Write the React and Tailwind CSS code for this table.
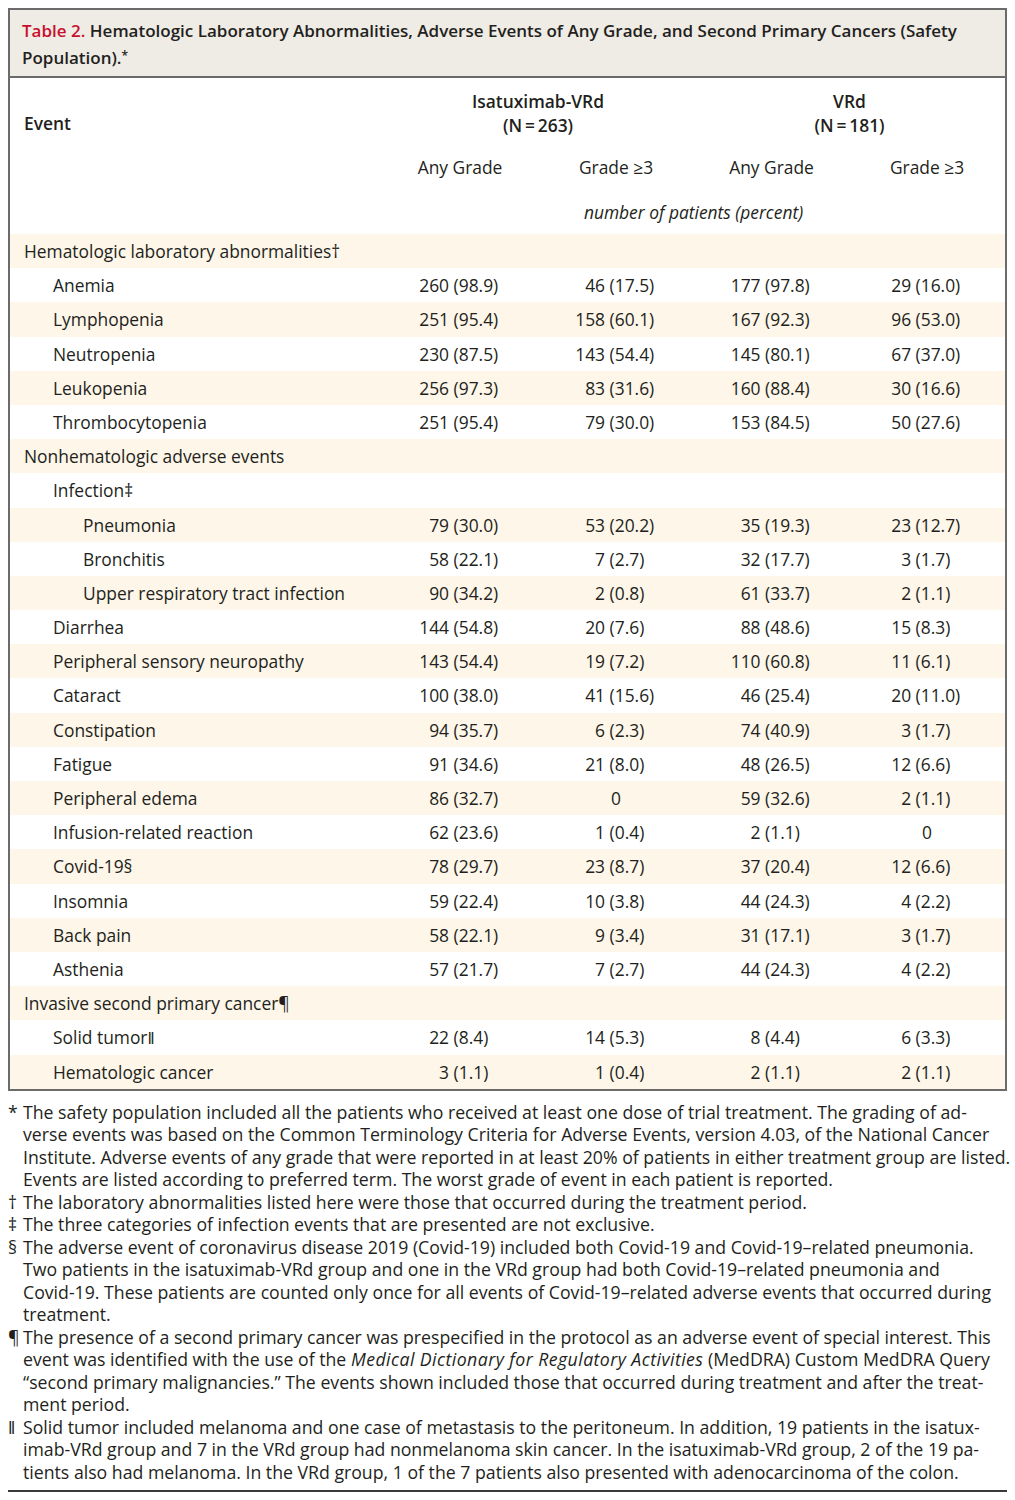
import React from "react";

const rows = [
  { l: "Hematologic laboratory abnormalities\u2020", lv: 0 },
  { l: "Anemia", lv: 1, v: ["260 (98.9)", "46 (17.5)", "177 (97.8)", "29 (16.0)"] },
  { l: "Lymphopenia", lv: 1, v: ["251 (95.4)", "158 (60.1)", "167 (92.3)", "96 (53.0)"] },
  { l: "Neutropenia", lv: 1, v: ["230 (87.5)", "143 (54.4)", "145 (80.1)", "67 (37.0)"] },
  { l: "Leukopenia", lv: 1, v: ["256 (97.3)", "83 (31.6)", "160 (88.4)", "30 (16.6)"] },
  { l: "Thrombocytopenia", lv: 1, v: ["251 (95.4)", "79 (30.0)", "153 (84.5)", "50 (27.6)"] },
  { l: "Nonhematologic adverse events", lv: 0 },
  { l: "Infection\u2021", lv: 1 },
  { l: "Pneumonia", lv: 2, v: ["79 (30.0)", "53 (20.2)", "35 (19.3)", "23 (12.7)"] },
  { l: "Bronchitis", lv: 2, v: ["58 (22.1)", "7 (2.7)", "32 (17.7)", "3 (1.7)"] },
  { l: "Upper respiratory tract infection", lv: 2, v: ["90 (34.2)", "2 (0.8)", "61 (33.7)", "2 (1.1)"] },
  { l: "Diarrhea", lv: 1, v: ["144 (54.8)", "20 (7.6)", "88 (48.6)", "15 (8.3)"] },
  { l: "Peripheral sensory neuropathy", lv: 1, v: ["143 (54.4)", "19 (7.2)", "110 (60.8)", "11 (6.1)"] },
  { l: "Cataract", lv: 1, v: ["100 (38.0)", "41 (15.6)", "46 (25.4)", "20 (11.0)"] },
  { l: "Constipation", lv: 1, v: ["94 (35.7)", "6 (2.3)", "74 (40.9)", "3 (1.7)"] },
  { l: "Fatigue", lv: 1, v: ["91 (34.6)", "21 (8.0)", "48 (26.5)", "12 (6.6)"] },
  { l: "Peripheral edema", lv: 1, v: ["86 (32.7)", "0", "59 (32.6)", "2 (1.1)"] },
  { l: "Infusion-related reaction", lv: 1, v: ["62 (23.6)", "1 (0.4)", "2 (1.1)", "0"] },
  { l: "Covid-19\u00a7", lv: 1, v: ["78 (29.7)", "23 (8.7)", "37 (20.4)", "12 (6.6)"] },
  { l: "Insomnia", lv: 1, v: ["59 (22.4)", "10 (3.8)", "44 (24.3)", "4 (2.2)"] },
  { l: "Back pain", lv: 1, v: ["58 (22.1)", "9 (3.4)", "31 (17.1)", "3 (1.7)"] },
  { l: "Asthenia", lv: 1, v: ["57 (21.7)", "7 (2.7)", "44 (24.3)", "4 (2.2)"] },
  { l: "Invasive second primary cancer\u00b6", lv: 0 },
  { l: "Solid tumor\u2016", lv: 1, v: ["22 (8.4)", "14 (5.3)", "8 (4.4)", "6 (3.3)"] },
  { l: "Hematologic cancer", lv: 1, v: ["3 (1.1)", "1 (0.4)", "2 (1.1)", "2 (1.1)"] },
];

const countW = ["w-[3ch]", "w-[3ch]", "w-[3ch]", "w-[2ch]"];

function Cell({ v, ci }) {
  if (v === undefined) return <div />;
  if (!v.includes(" (")) {
    return <div className="flex items-center justify-center">{v}</div>;
  }
  const i = v.indexOf(" (");
  const a = v.slice(0, i);
  const b = v.slice(i);
  return (
    <div className="flex items-center justify-center pr-[2px]">
      <span className={`${countW[ci]} text-right`}>{a}</span>
      <span className="w-[5ch] whitespace-pre text-left">{b}</span>
    </div>
  );
}

const pad = ["pl-[14px]", "pl-[43px]", "pl-[73px]"];

const notes = [
  {
    s: "*",
    lines: [
      "The safety population included all the patients who received at least one dose of trial treatment. The grading of ad-",
      "verse events was based on the Common Terminology Criteria for Adverse Events, version 4.03, of the National Cancer",
      "Institute. Adverse events of any grade that were reported in at least 20% of patients in either treatment group are listed.",
      "Events are listed according to preferred term. The worst grade of event in each patient is reported.",
    ],
  },
  { s: "\u2020", lines: ["The laboratory abnormalities listed here were those that occurred during the treatment period."] },
  { s: "\u2021", lines: ["The three categories of infection events that are presented are not exclusive."] },
  {
    s: "\u00a7",
    lines: [
      "The adverse event of coronavirus disease 2019 (Covid-19) included both Covid-19 and Covid-19\u2013related pneumonia.",
      "Two patients in the isatuximab-VRd group and one in the VRd group had both Covid-19\u2013related pneumonia and",
      "Covid-19. These patients are counted only once for all events of Covid-19\u2013related adverse events that occurred during",
      "treatment.",
    ],
  },
  {
    s: "\u00b6",
    lines: [
      "The presence of a second primary cancer was prespecified in the protocol as an adverse event of special interest. This",
      <>
        event was identified with the use of the{" "}
        <i className="tracking-[0.45px]">Medical Dictionary for Regulatory Activities</i> (MedDRA) Custom MedDRA Query
      </>,
      "\u201csecond primary malignancies.\u201d The events shown included those that occurred during treatment and after the treat-",
      "ment period.",
    ],
  },
  {
    s: "\u2016",
    lines: [
      "Solid tumor included melanoma and one case of metastasis to the peritoneum. In addition, 19 patients in the isatux-",
      "imab-VRd group and 7 in the VRd group had nonmelanoma skin cancer. In the isatuximab-VRd group, 2 of the 19 pa-",
      "tients also had melanoma. In the VRd group, 1 of the 7 patients also presented with adenocarcinoma of the colon.",
    ],
  },
];

export default function App() {
  return (
    <div className="bg-white w-[1015px] h-[1500px] pt-[8px] px-[8px] font-['Open_Sans',sans-serif] text-[#231f20]">
      <div className="w-[999px] border-2 border-[#6b6b6b]">
        <div className="bg-[#efebe5] border-b-2 border-[#6b6b6b] h-[68px] pl-[12px] pt-[8px] text-[17px] leading-[25px] font-semibold whitespace-nowrap">
          <span className="text-[#c8102e]">Table 2.</span> Hematologic Laboratory Abnormalities, Adverse Events of Any Grade, and Second Primary Cancers (Safety
          <br />
          Population).<span className="text-[12px] align-[4px]">*</span>
        </div>
        <div className="grid grid-cols-[372px_156px_156px_155px_156px] h-[156px] content-start text-[17.4px] leading-[24px]">
          <div className="pl-[14px] pt-[33px] font-semibold">Event</div>
          <div className="col-span-2 pt-[11px] text-center font-semibold">
            Isatuximab-VRd
            <br />
            (N{"\u2009"}={"\u2009"}263)
          </div>
          <div className="col-span-2 pt-[11px] text-center font-semibold">
            VRd
            <br />
            (N{"\u2009"}={"\u2009"}181)
          </div>
          <div />
          <div className="mt-[18px] text-center">Any Grade</div>
          <div className="mt-[18px] text-center">Grade {"\u2265"}3</div>
          <div className="mt-[18px] text-center">Any Grade</div>
          <div className="mt-[18px] text-center">Grade {"\u2265"}3</div>
          <div />
          <div className="col-span-4 mt-[21px] text-center italic">number of patients (percent)</div>
        </div>
        <div className="text-[17.4px]">
          {rows.map((r, i) => (
            <div
              key={i}
              className={`grid grid-cols-[372px_156px_156px_155px_156px] h-[34.2px] ${i % 2 === 0 ? "bg-[#fdf6e9]" : "bg-white"}`}
            >
              <div className={`flex items-center whitespace-nowrap ${pad[r.lv]}`}>{r.l}</div>
              {[0, 1, 2, 3].map((ci) => (
                <Cell key={ci} ci={ci} v={r.v ? r.v[ci] : undefined} />
              ))}
            </div>
          ))}
        </div>
      </div>
      <div className="mt-[10px] text-[17.7px] leading-[22.5px] whitespace-nowrap border-b-2 border-[#3a3a3a] pb-[7px] w-[999px]">
        {notes.map((n, i) => (
          <div key={i} className="flex">
            <span className="w-[15px] shrink-0">{n.s}</span>
            <div>
              {n.lines.map((ln, j) => (
                <div key={j}>{ln}</div>
              ))}
            </div>
          </div>
        ))}
      </div>
    </div>
  );
}
